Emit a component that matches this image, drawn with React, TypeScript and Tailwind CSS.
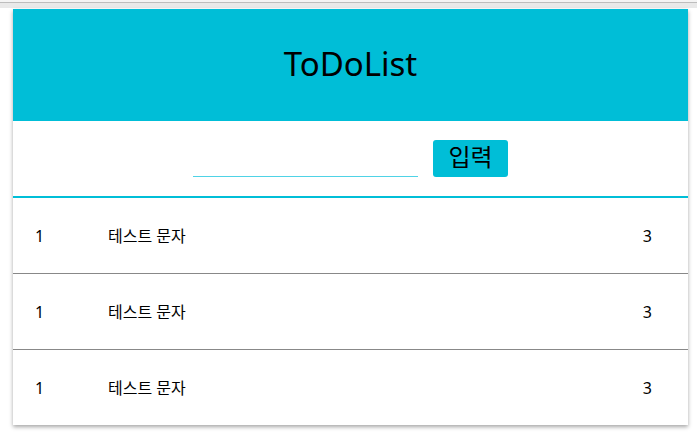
import React from 'react';

const items = [
  { id: 1, text: '테스트 문자', count: 3 },
  { id: 1, text: '테스트 문자', count: 3 },
  { id: 1, text: '테스트 문자', count: 3 },
];

export default function App() {
  const [value, setValue] = React.useState('');

  return (
    <div
      className="min-h-[447px] w-[697px] bg-white text-black"
      style={{ fontFamily: '"Noto Sans", "Noto Sans CJK KR", sans-serif' }}
    >
      {/* top strip */}
      <div className="h-[8px] bg-[#e9e9e9] border-t-2 border-[#f4f4f4]">
        <div className="h-px bg-[#bdbdbd]" />
      </div>

      {/* Card */}
      <div className="mt-px ml-[13px] w-[675px] bg-white shadow-[0_2px_4px_rgba(0,0,0,0.35)]">
        {/* Header */}
        <div className="h-[112px] bg-[#00bed7] flex items-center justify-center">
          <h1 className="text-[33px] leading-none pb-1">ToDoList</h1>
        </div>

        {/* Input */}
        <div className="h-[77px] border-b-2 border-[#00bed7] flex items-start justify-center gap-[15px] pt-[19px]">
          <input
            value={value}
            onChange={(e) => setValue(e.target.value)}
            className="mt-[4px] w-[225px] h-[33px] border-0 border-b border-solid border-b-[#4fd3e6] outline-none text-[15px]"
          />
          <button className="w-[75px] h-[37px] rounded-[3px] bg-[#00bed7] text-[24px] leading-none flex items-center justify-center pb-[3px]">
            입력
          </button>
        </div>

        {/* List */}
        <ul>
          {items.map((item, i) => (
            <li
              key={i}
              className={`h-[75px] flex items-center text-[16px] ${i < items.length - 1 ? 'border-b border-[#888888] box-content' : ''}`}
            >
              <span className="w-[95px] pl-[22px]">{item.id}</span>
              <span className="flex-1">{item.text}</span>
              <span className="pr-[36px]">{item.count}</span>
            </li>
          ))}
        </ul>
      </div>
    </div>
  );
}
